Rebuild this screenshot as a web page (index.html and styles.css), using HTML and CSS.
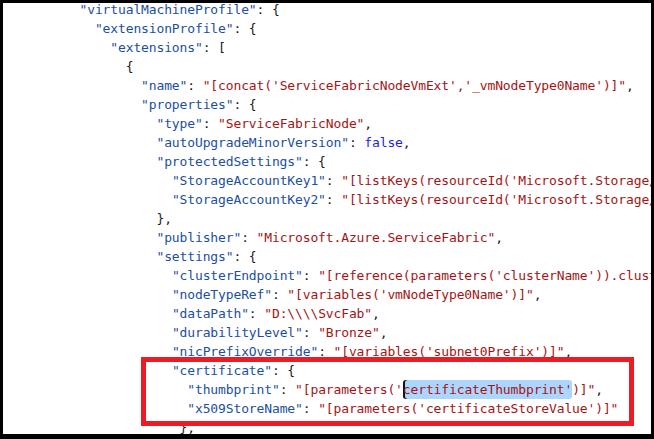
FILE: index.html
```html
<!DOCTYPE html>
<html>

<head>
    <title>virtualMachineProfile</title>
    <meta http-equiv="Content-Type" content="text/html; charset=utf-8">
    <link rel="stylesheet" href="styles.css">
</head>

<body>
    <div class="frame">
<pre class="code"><span class="k">"virtualMachineProfile"</span>: {
  <span class="k">"extensionProfile"</span>: {
    <span class="k">"extensions"</span>: [
      {
        <span class="k">"name"</span>: <span class="s">"[concat('ServiceFabricNodeVmExt','_vmNodeType0Name')]"</span>,
        <span class="k">"properties"</span>: {
          <span class="k">"type"</span>: <span class="s">"ServiceFabricNode"</span>,
          <span class="k">"autoUpgradeMinorVersion"</span>: <span class="b">false</span>,
          <span class="k">"protectedSettings"</span>: {
            <span class="k">"StorageAccountKey1"</span>: <span class="s">"[listKeys(resourceId('Microsoft.Storage/storageAccounts', variables('supportLogStorageAccountName')),'2015-05-01-preview').key1]"</span>,
            <span class="k">"StorageAccountKey2"</span>: <span class="s">"[listKeys(resourceId('Microsoft.Storage/storageAccounts', variables('supportLogStorageAccountName')),'2015-05-01-preview').key2]"</span>
          },
          <span class="k">"publisher"</span>: <span class="s">"Microsoft.Azure.ServiceFabric"</span>,
          <span class="k">"settings"</span>: {
            <span class="k">"clusterEndpoint"</span>: <span class="s">"[reference(parameters('clusterName')).clusterEndpoint]"</span>,
            <span class="k">"nodeTypeRef"</span>: <span class="s">"[variables('vmNodeType0Name')]"</span>,
            <span class="k">"dataPath"</span>: <span class="s">"D:\\\\SvcFab"</span>,
            <span class="k">"durabilityLevel"</span>: <span class="s">"Bronze"</span>,
            <span class="k">"nicPrefixOverride"</span>: <span class="s">"[variables('subnet0Prefix')]"</span>,
            <span class="k">"certificate"</span>: {
              <span class="k">"thumbprint"</span>: <span class="s">"[parameters('<span class="sel">certificateThumbprint'</span>)]"</span>,
              <span class="k">"x509StoreName"</span>: <span class="s">"[parameters('certificateStoreValue')]"</span>
             },
</pre>
        <div class="callout"></div>
    </div>
</body>

</html>
```

FILE: styles.css
```css
html,
body {
    margin: 0;
    background-color: black;
}

.frame {
    position: relative;
    width: 648px;
    height: 431px;
    margin: 3px 3px 5px 3px;
    background-color: white;
    overflow: hidden;
}

.code {
    margin: -3px 0 0 0;
    padding-left: 76.5px;
    font-family: "DejaVu Sans Mono", "Liberation Mono", monospace;
    font-size: 13px;
    letter-spacing: -0.13px;
    line-height: 19px;
    color: #1a1a1a;
    white-space: pre;
}

.k {
    color: #1c4f9f;
}

.s {
    color: #a31515;
}

.b {
    color: #1a1aff;
}

.sel {
    background-color: #add6ff;
    border-radius: 3px;
    padding: 2px 0;
    box-shadow: inset 2px 0 0 #111;
}

/* red annotation box drawn over the code */
.callout {
    position: absolute;
    left: 138px;
    top: 354px;
    width: 493px;
    height: 69px;
    box-sizing: border-box;
    border: 5px solid #ec1c24;
}
```
